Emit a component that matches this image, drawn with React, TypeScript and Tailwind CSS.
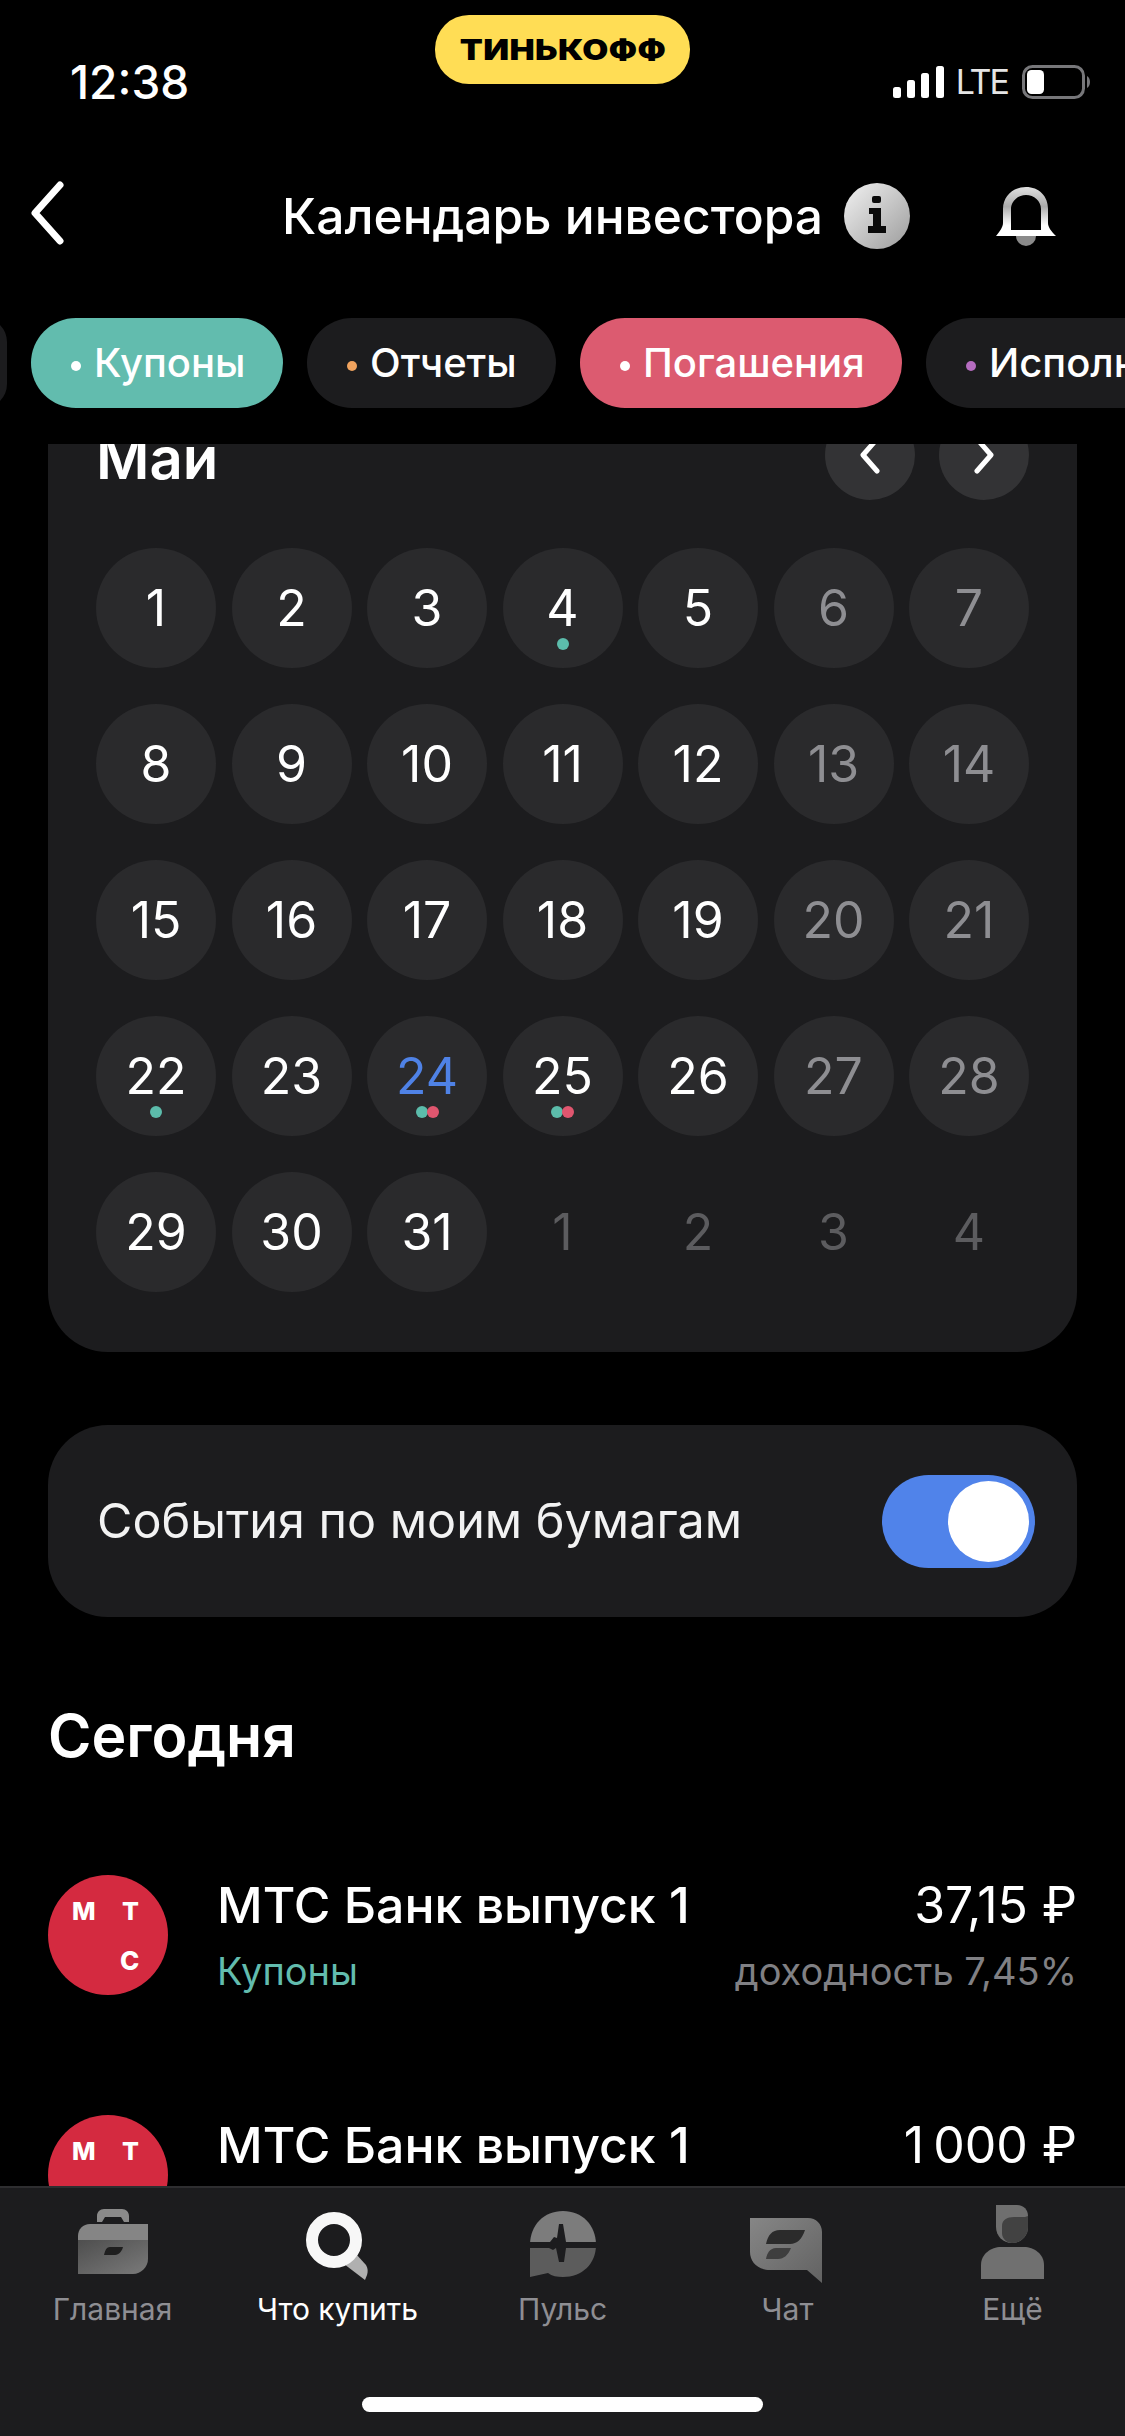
const FONT = "font-['Inter','Noto_Sans',sans-serif]";

const days = [
  [1, 2, 3, 4, 5, 6, 7],
  [8, 9, 10, 11, 12, 13, 14],
  [15, 16, 17, 18, 19, 20, 21],
  [22, 23, 24, 25, 26, 27, 28],
  [29, 30, 31, 1, 2, 3, 4],
];

const dots: Record<number, string[]> = {
  4: ['teal'],
  22: ['teal'],
  24: ['teal', 'red'],
  25: ['teal', 'red'],
};

function StatusBar() {
  return (
    <div className="relative flex h-[150px] shrink-0 items-start justify-between pt-[57px] pr-[35px] pl-[70px]">
      <span className="text-[46px] leading-[50px] font-medium text-white">12:38</span>
      <div className="absolute top-[15px] left-[435px] flex h-[69px] w-[255px] items-center justify-center rounded-[34px] bg-[#ffdd55]">
        <span className="scale-x-[1.2] text-[28px] leading-none font-black tracking-[0.3px] text-black">ТИНЬКОФФ</span>
      </div>
      <div className="flex h-[50px] items-center">
        <svg width="51" height="32" viewBox="0 0 51 32" fill="#fff">
          <rect x="0" y="21" width="8" height="11" rx="2.5" />
          <rect x="14" y="14" width="8" height="18" rx="2.5" />
          <rect x="28" y="7" width="8" height="25" rx="2.5" />
          <rect x="43" y="0" width="8" height="32" rx="2.5" />
        </svg>
        <span className="ml-[12px] text-[34px] leading-none font-normal tracking-[-2px] text-[#e5e5e5]">LTE</span>
        <svg className="ml-[14px]" width="68" height="34" viewBox="0 0 68 34" fill="none">
          <rect x="1.5" y="1.5" width="60" height="31" rx="9" stroke="#77777a" strokeWidth="3" />
          <rect x="5" y="5" width="17" height="24" rx="4.5" fill="#fff" />
          <path d="M65 11c2 1 3 3.500 3 6s-1 5-3 6z" fill="#77777a" />
        </svg>
      </div>
    </div>
  );
}

function Header() {
  return (
    <div className="relative flex h-[168px] shrink-0 items-start pt-[36px] pl-[282px]">
      <svg className="absolute top-[31px] left-[27px]" width="40" height="64" viewBox="0 0 40 64" fill="none">
        <path d="M33 4 8 32l25 28" stroke="#fff" strokeWidth="7" strokeLinecap="round" strokeLinejoin="round" />
      </svg>
      <span className="text-[49.7px] leading-[60px] font-medium text-white">Календарь инвестора</span>
      <svg className="mt-[-3px] ml-[21px]" width="66" height="66" viewBox="0 0 66 66">
        <defs>
          <linearGradient id="infoG" x1="0" y1="0" x2="1" y2="1">
            <stop offset="0" stopColor="#f2f2f2" />
            <stop offset="1" stopColor="#9c9c9c" />
          </linearGradient>
        </defs>
        <circle cx="33" cy="33" r="33" fill="url(#infoG)" />
        <rect x="28" y="13" width="9" height="7" rx="2" fill="#0a0a0a" />
        <path d="M25 25H37V43H42V50H24V43H29V31H25Z" fill="#0a0a0a" />
      </svg>
      <svg className="absolute top-[37px] left-[996px]" width="60" height="59" viewBox="0 0 60 59">
        <defs>
          <linearGradient id="bellG" x1="0" y1="0" x2="0" y2="1">
            <stop offset="0" stopColor="#e0e0e0" />
            <stop offset="0.4" stopColor="#ababab" />
            <stop offset="0.78" stopColor="#fff" />
          </linearGradient>
        </defs>
        <path d="M20 49h20a10 10 0 0 1-20 0z" fill="#8a8a8a" />
        <path
          fillRule="evenodd"
          d="M7 22C7 9 17 0 30 0S52 9 52 22V36C52 40 55 44 60 49H0C4 44 7 40 7 36ZM15 43H45V22C45 14 38 8 30 8S15 14 15 22Z"
          fill="url(#bellG)"
        />
      </svg>
    </div>
  );
}

function Chip({ label, dot, bg, width }: { label: string; dot: string; bg: string; width: string }) {
  return (
    <div className={`flex h-[90px] shrink-0 items-center rounded-[45px] pl-[40px] ${bg} ${width}`}>
      <span className={`mt-[6px] mr-[13px] h-[10px] w-[10px] shrink-0 rounded-full ${dot}`} />
      <span className="text-[40px] leading-none font-medium whitespace-nowrap text-white">{label}</span>
    </div>
  );
}

function Filters() {
  return (
    <div className="flex h-[90px] shrink-0 gap-[24px] overflow-hidden pl-[31px]">
      <div className="-ml-[48px] h-[90px] w-[24px] shrink-0 rounded-r-[45px] bg-[#1c1c1e]" />
      <Chip label="Купоны" dot="bg-white" bg="bg-[#62bcae]" width="w-[252px]" />
      <Chip label="Отчеты" dot="bg-[#f0a35e]" bg="bg-[#1c1c1e]" width="w-[249px]" />
      <Chip label="Погашения" dot="bg-white" bg="bg-[#dc5b70]" width="w-[322px]" />
      <Chip label="Исполнение" dot="bg-[#b56cc0]" bg="bg-[#1c1c1e]" width="w-[340px]" />
    </div>
  );
}

function DayCell({ day, row, col }: { day: number; row: number; col: number }) {
  const nextMonth = row === 4 && col > 2;
  const weekend = col > 4;
  const today = day === 24;
  const color = today ? 'text-[#4f82e6]' : nextMonth ? 'text-[#5c5c5f]' : weekend ? 'text-[#8e8e92]' : 'text-white';
  const marks = nextMonth ? undefined : dots[day];
  return (
    <div className={`relative flex h-[120px] w-[120px] items-center justify-center rounded-full ${nextMonth ? '' : 'bg-[#2a2a2c]'}`}>
      <span className={`text-[50px] leading-none font-normal ${color}`}>{day}</span>
      {marks && (
        <div className="absolute top-[90px] left-0 flex w-full justify-center">
          {marks.map((m, i) => (
            <span
              key={m}
              className={`h-[12px] w-[12px] rounded-full ${m === 'teal' ? 'bg-[#5cbcab]' : 'bg-[#e0566f]'} ${i > 0 ? '-ml-[1px]' : ''}`}
            />
          ))}
        </div>
      )}
    </div>
  );
}

function MonthArrow({ d }: { d: string }) {
  return (
    <div className="flex h-[90px] w-[90px] items-center justify-center rounded-full bg-[#333335]">
      <svg width="24" height="38" viewBox="0 0 24 38" fill="none">
        <path d={d} stroke="#fff" strokeWidth="5" strokeLinecap="round" strokeLinejoin="round" />
      </svg>
    </div>
  );
}

function Calendar() {
  return (
    <div className="mx-[48px] -mt-[84px] shrink-0 rounded-[60px] bg-[#1c1c1e] px-[48px] pt-[50px] pb-[60px]">
      <div className="flex h-[90px] items-start justify-between">
        <span className="mt-[16px] text-[58px] leading-[64px] font-semibold text-white">Май</span>
        <div className="flex gap-[24px]">
          <MonthArrow d="M19 3 5 19l14 16" />
          <MonthArrow d="M5 3l14 16L5 35" />
        </div>
      </div>
      <div className="mt-[48px] flex flex-col gap-[36px]">
        {days.map((week, row) => (
          <div key={row} className="flex justify-between">
            {week.map((day, col) => (
              <DayCell key={col} day={day} row={row} col={col} />
            ))}
          </div>
        ))}
      </div>
    </div>
  );
}

function Toggle() {
  return (
    <div className="mx-[48px] mt-[73px] flex h-[192px] shrink-0 items-center justify-between rounded-[60px] bg-[#1c1c1e] pr-[42px] pl-[49px]">
      <span className="text-[48.5px] leading-none font-normal text-[#f2f2f2]">События по моим бумагам</span>
      <div className="flex h-[93px] w-[153px] items-center justify-end rounded-full bg-[#5083ea] pr-[6px]">
        <div className="h-[81px] w-[81px] rounded-full bg-white" />
      </div>
    </div>
  );
}

function MtsLogo() {
  return (
    <div className="relative h-[120px] w-[120px] shrink-0 rounded-full bg-[#d42a40]">
      <span className="absolute top-[24px] left-[24px] text-[25px] leading-none font-extrabold text-white">М</span>
      <span className="absolute top-[24px] left-[74px] text-[25px] leading-none font-extrabold text-white">Т</span>
      <span className="absolute top-[73px] left-[72px] text-[26px] leading-none font-extrabold text-white">С</span>
    </div>
  );
}

function EventRow({ value, sub, kind }: { value: string; sub?: string; kind?: string }) {
  return (
    <div className="flex h-[240px] shrink-0 px-[48px]">
      <MtsLogo />
      <div className="ml-[49px] flex-1">
        <div className="flex h-[60px] items-center justify-between">
          <span className="text-[50px] leading-none font-medium text-white">МТС Банк выпуск 1</span>
          <span className="text-[50px] leading-none font-normal text-white">{value}</span>
        </div>
        <div className="mt-[12px] flex h-[48px] items-center justify-between">
          <span className="text-[38px] leading-none text-[#62bcae]">{kind}</span>
          <span className="text-[38px] leading-none text-[#808084]">{sub}</span>
        </div>
      </div>
    </div>
  );
}

function Briefcase() {
  return (
    <svg className="mt-[4px]" width="70" height="65" viewBox="0 0 70 65">
      <defs>
        <linearGradient id="caseB" x1="0" y1="0" x2="1" y2="1">
          <stop offset="0" stopColor="#4e4e4e" />
          <stop offset="1" stopColor="#7a7a7a" />
        </linearGradient>
      </defs>
      <path d="M19 13V7c0-4 3-7 7-7h18c4 0 7 3 7 7v6h-5l-3-5H27l-3 5z" fill="#8a8a8a" />
      <path d="M0 31V27c0-7 5-12 12-12H70V31z" fill="#858585" />
      <path d="M0 31H70V50c0 8-7 15-15 15H0z" fill="url(#caseB)" />
      <path d="M32 38h13c-1 4-4 8-8 8H26c1-4 2-8 6-8z" fill="#1f1f1f" />
    </svg>
  );
}

function Magnifier() {
  return (
    <svg className="mt-[7px] -ml-[2px]" width="62" height="68" viewBox="0 0 62 68">
      <path d="M38 52 50 42 60 53C62 56 62 60 61 63L59 68Z" fill="#b0b0b0" />
      <circle cx="28" cy="28" r="22" fill="none" stroke="#f7f7f7" strokeWidth="12" />
    </svg>
  );
}

function Pulse() {
  return (
    <svg className="mt-[6px]" width="66" height="66" viewBox="0 0 66 66">
      <path d="M0 34C0 14 14 0 33 0S66 14 66 34Z" fill="#7c7c7c" />
      <path d="M0 34H66C66 53 52 66 33 66c-6 0-11-1-15-4L0 66Z" fill="#5c5c5c" />
      <path d="M0 31H20L24 26L27 27L29 13H33L36 31H66V37H36L34 51H29L26 37L23 39L19 37H0Z" fill="#1c1c1e" />
    </svg>
  );
}

function ChatIcon() {
  return (
    <svg className="mt-[13px] -ml-[4px]" width="72" height="65" viewBox="0 0 72 65">
      <defs>
        <linearGradient id="chatG" x1="0" y1="0" x2="1" y2="1">
          <stop offset="0" stopColor="#868686" />
          <stop offset="1" stopColor="#626262" />
        </linearGradient>
      </defs>
      <path d="M0 0H58C66 0 72 6 72 14V65L57 52H20C8 52 0 44 0 34Z" fill="url(#chatG)" />
      <path d="M30 12H55C52 21 47 26 40 26H16C18 17 22 12 30 12Z" fill="#2b2b2b" />
      <path d="M26 30H41C38 37 34 41 28 41H16C17 35 20 30 26 30Z" fill="#3e3e3e" />
    </svg>
  );
}

function Person() {
  return (
    <svg width="63" height="74" viewBox="0 0 63 74">
      <path d="M15 0H36C43 0 47 5 47 11V22C47 31 40 38 31 38 22 38 15 31 15 22Z" fill="#6f6f6f" />
      <path d="M47 11V22C47 31 40 38 31 38 26 38 21 34 21 28V21C21 15 26 12 33 12H44Z" fill="#424242" />
      <path d="M0 74V60C0 49 10 42 20 42H43C53 42 63 49 63 60V74Z" fill="#707070" />
    </svg>
  );
}

function NavItem({ label, active, children }: { label: string; active?: boolean; children: React.ReactNode }) {
  return (
    <div className="flex w-[225px] flex-col items-center">
      <div className="flex h-[78px] items-start">{children}</div>
      <span className={`mt-[9px] text-[30px] leading-[34px] font-normal ${active ? 'text-white' : 'text-[#8e8e93]'}`}>{label}</span>
    </div>
  );
}

function BottomNav() {
  return (
    <div className="relative z-10 h-[250px] shrink-0 border-t-[2px] border-[#2e2e30] bg-[#1c1c1e]">
      <div className="flex pt-[17px]">
        <NavItem label="Главная"><Briefcase /></NavItem>
        <NavItem label="Что купить" active><Magnifier /></NavItem>
        <NavItem label="Пульс"><Pulse /></NavItem>
        <NavItem label="Чат"><ChatIcon /></NavItem>
        <NavItem label="Ещё"><Person /></NavItem>
      </div>
      <div className="absolute top-[209px] left-[362px] h-[15px] w-[401px] rounded-full bg-white" />
    </div>
  );
}

export default function App() {
  return (
    <div className={`flex h-[2436px] w-[1125px] flex-col overflow-hidden bg-black ${FONT}`}>
      <StatusBar />
      <Header />
      <Filters />
      <div className="mt-[36px] flex min-h-0 flex-1 flex-col overflow-hidden">
        <Calendar />
        <Toggle />
        <h2 className="mt-[87px] ml-[48px] shrink-0 text-[59px] leading-[64px] font-semibold text-white">Сегодня</h2>
        <div className="mt-[107px] flex shrink-0 flex-col">
          <EventRow value="37,15 ₽" sub="доходность 7,45%" kind="Купоны" />
          <EventRow value={'1\u2009000 ₽'} />
        </div>
      </div>
      <BottomNav />
    </div>
  );
}
